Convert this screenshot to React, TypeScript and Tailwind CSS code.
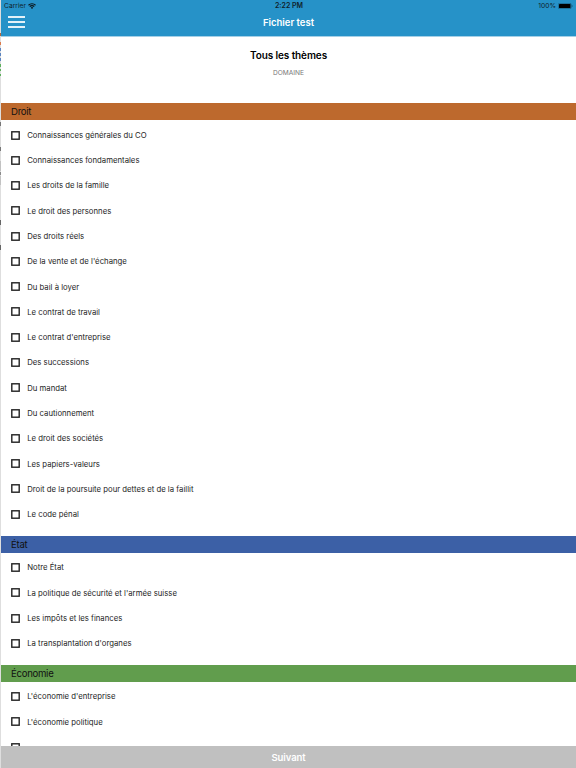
import { useState } from 'react'

const SECTIONS = [
  {
    title: 'Droit',
    color: 'bg-[#bd692d]',
    themes: [
      'Connaissances générales du CO',
      'Connaissances fondamentales',
      'Les droits de la famille',
      'Le droit des personnes',
      'Des droits réels',
      "De la vente et de l'échange",
      'Du bail à loyer',
      'Le contrat de travail',
      "Le contrat d'entreprise",
      'Des successions',
      'Du mandat',
      'Du cautionnement',
      'Le droit des sociétés',
      'Les papiers-valeurs',
      'Droit de la poursuite pour dettes et de la faillit',
      'Le code pénal',
    ],
  },
  {
    title: 'État',
    color: 'bg-[#3c60a6]',
    themes: [
      'Notre État',
      "La politique de sécurité et l'armée suisse",
      'Les impôts et les finances',
      "La transplantation d'organes",
    ],
  },
  {
    title: 'Économie',
    color: 'bg-[#619d4d]',
    themes: ["L'économie d'entreprise", "L'économie politique", ''],
  },
]

// Edge of the side menu that stays visible left of the page
const MENU_EDGE = [
  { gap: 'h-[33px]', mark: 'h-[3px] bg-[#b5673a]' },
  { gap: 'h-[6px]', mark: 'h-[3px] bg-[#dc7b4c]' },
  { gap: 'h-[3px]', mark: 'h-[3px] bg-[#5b84c0]' },
  { gap: 'h-[2px]', mark: 'h-[3px] bg-[#5b84c0]' },
  { gap: 'h-[2px]', mark: 'h-[3px] bg-[#5b84c0]' },
  { gap: 'h-[3px]', mark: 'h-[3px] bg-[#5cb05c]' },
  { gap: 'h-[2px]', mark: 'h-[2px] bg-[#5cb05c]' },
  { gap: 'h-[3px]', mark: 'h-[2px] bg-[#5cb05c]' },
  { gap: 'h-[46px]', mark: 'h-[4px] bg-[#777777]' },
  { gap: 'h-[21px]', mark: 'h-[4px] bg-[#777777]' },
  { gap: 'h-[10px]', mark: 'h-[10px] bg-[#c2c2c2]' },
  { gap: 'h-[1px]', mark: 'h-[3px] bg-[#8a8a8a]' },
  { gap: 'h-[1px]', mark: 'h-[9px] bg-[#c2c2c2]' },
  { gap: 'h-[35px]', mark: 'h-[5px] bg-[#666666]' },
  { gap: 'h-[20px]', mark: 'h-[5px] bg-[#666666]' },
]

function CheckBox({ checked }: { checked: boolean }) {
  return (
    <svg viewBox="0 0 9 9" className="mr-[7.2px] size-[9px] shrink-0">
      <rect x="0.8" y="0.8" width="7.4" height="7.4" fill={checked ? '#222' : 'none'} stroke="#222" strokeWidth="1.4" />
    </svg>
  )
}

export default function App() {
  const [checked, setChecked] = useState<string[]>([])

  const toggle = (theme: string) =>
    setChecked(prev => (prev.includes(theme) ? prev.filter(t => t !== theme) : [...prev, theme]))

  return (
    <div className="flex h-[768px] w-[576px] overflow-hidden bg-white font-['Inter',sans-serif] text-[#1c1c1c]">
      <div className="w-px shrink-0 bg-[#dedede]">
        {MENU_EDGE.map((edge, i) => (
          <div key={i}>
            <div className={edge.gap} />
            <div className={edge.mark} />
          </div>
        ))}
      </div>

      <div className="flex min-w-0 flex-1 flex-col">
        {/* Status bar + navigation */}
        <header className="h-[37px] shrink-0 border-b border-[#a5d0e7] bg-[#2692c8]">
          <div className="grid h-3 grid-cols-3 items-center px-[3px] text-[6.7px] leading-3 text-[#10222c]">
            <div className="flex items-center gap-[2px]">
              <span>Carrier</span>
              <svg viewBox="0 0 16 12" className="h-[6px] w-[8px]" fill="none" stroke="#0c161c" strokeWidth="2.4">
                <path d="M1 4.4a10 10 0 0 1 14 0M3.6 7.2a6.2 6.2 0 0 1 8.8 0" />
                <path d="M8 11.8 5.6 9.3a3.4 3.4 0 0 1 4.8 0z" fill="#0c161c" stroke="none" />
              </svg>
            </div>
            <span className="pl-px text-center text-[7px] font-semibold">2:22 PM</span>
            <div className="flex items-center justify-end gap-[2px]">
              <span>100%</span>
              <svg viewBox="0 0 15 6" className="h-[6px] w-[15px]">
                <rect x="0.3" y="0.3" width="12.9" height="5.4" rx="1.2" fill="none" stroke="#14506d" strokeWidth="0.6" />
                <rect x="1" y="1" width="11.5" height="4" rx="0.6" fill="#000" />
                <path d="M13.8 2v2q.8-.2.8-1t-.8-1z" fill="#14506d" />
              </svg>
            </div>
          </div>
          <div className="grid h-5 grid-cols-3 items-center px-[7px]">
            <button aria-label="Menu" className="flex w-[17px] flex-col gap-[3px]">
              <span className="h-[2px] bg-[#e3f1f8]" />
              <span className="h-[2px] bg-[#e3f1f8]" />
              <span className="h-[2px] bg-[#e3f1f8]" />
            </button>
            <h1 className="pt-[2px] text-center text-[9.5px] leading-[18px] font-semibold text-white">Fichier test</h1>
          </div>
        </header>

        {/* Title */}
        <div className="h-[66.4px] shrink-0 pt-[11px] text-center">
          <h2 className="text-[10px] leading-[14px] font-semibold tracking-[-0.01em] text-black">Tous les thèmes</h2>
          <p className="mt-[6px] text-[6.6px] leading-[10px] text-[#777777]">DOMAINE</p>
        </div>

        <main className="min-h-0 flex-1 overflow-hidden">
          {SECTIONS.map(section => (
            <section key={section.title}>
              <h3
                className={`h-[16.8px] pl-[10px] text-[9.6px] leading-[18px] tracking-[-0.03em] text-[#111111] ${section.color}`}
              >
                {section.title}
              </h3>
              <ul className="pt-[2.2px] pb-[9px]">
                {section.themes.map((theme, i) => (
                  <li key={i}>
                    <button
                      role="checkbox"
                      aria-checked={checked.includes(theme)}
                      onClick={() => toggle(theme)}
                      className="flex h-[25.29px] w-full items-center pl-[10px] text-left text-[7.75px]"
                    >
                      <CheckBox checked={checked.includes(theme)} />
                      <span className="pt-[1.4px]">{theme}</span>
                    </button>
                  </li>
                ))}
              </ul>
            </section>
          ))}
        </main>

        <button className="h-[22px] shrink-0 bg-[#c0c0c0] text-center text-[9.5px] leading-[23px] font-semibold tracking-[-0.01em] text-white">
          Suivant
        </button>
      </div>
    </div>
  )
}
